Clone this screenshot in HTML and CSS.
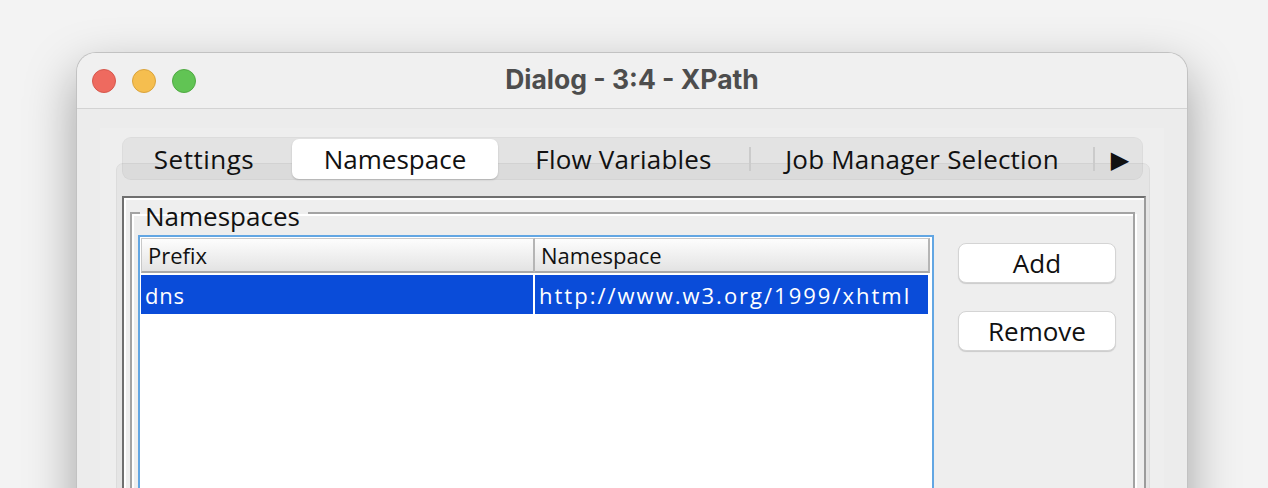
FILE: index.html
```html
<!DOCTYPE html>
<html lang="en">
<head>
  <meta charset="UTF-8">
  <title>Dialog - 3:4 - XPath</title>
  <link rel="stylesheet" href="styles.css">
</head>
<body>
  <div class="window">
    <div class="titlebar">
      <div class="lights">
        <span class="light red"></span>
        <span class="light yellow"></span>
        <span class="light green"></span>
      </div>
      <div class="title">Dialog - 3:4 - XPath</div>
    </div>

    <div class="body">
      <div class="panel">
        <div class="tabbar">
          <div class="tab tab-settings">Settings</div>
          <div class="tab tab-ns selected">Namespace</div>
          <div class="tab tab-flow">Flow Variables</div>
          <span class="sep"></span>
          <div class="tab tab-job">Job Manager Selection</div>
          <span class="sep"></span>
          <div class="tab tab-more">&#9654;</div>
        </div>

        <div class="tabpane">
          <div class="tabcontent">
            <fieldset class="group">
              <legend>Namespaces</legend>
              <div class="group-body">
                <div class="table-wrap">
                  <table class="ns-table">
                    <thead>
                      <tr>
                        <th class="col-prefix">Prefix</th>
                        <th class="col-ns">Namespace</th>
                      </tr>
                    </thead>
                    <tbody>
                      <tr class="row-selected">
                        <td>dns</td>
                        <td class="url">http://www.w3.org/1999/xhtml</td>
                      </tr>
                    </tbody>
                  </table>
                </div>
                <div class="buttons">
                  <button class="btn">Add</button>
                  <button class="btn">Remove</button>
                </div>
              </div>
            </fieldset>
          </div>
        </div>
      </div>
    </div>
  </div>
</body>
</html>
```

FILE: styles.css
```css
html, body {
  margin: 0;
  height: 100%;
  overflow: hidden;
}
body {
  background: #f3f3f3;
  font-family: "Open Sans", "DejaVu Sans", sans-serif;
  color: #111;
}
.window {
  box-sizing: border-box;
  width: 1112px;
  height: 520px;
  margin: 52px 0 0 76px;
  border: 1px solid #c2c2c2;
  border-bottom: none;
  border-radius: 20px 20px 0 0;
  background: #ececec;
  box-shadow: 0 20px 50px rgba(0,0,0,0.34);
  overflow: hidden;
}

/* title bar */
.titlebar {
  height: 55px;
  display: grid;
  grid-template-columns: 1fr auto 1fr;
  align-items: center;
  background: #f0f0f0;
  border-bottom: 1px solid #d3d3d3;
}
.lights {
  display: flex;
  gap: 16px;
  padding-left: 15px;
  padding-top: 1px;
}
.light {
  box-sizing: border-box;
  width: 24px;
  height: 24px;
  border-radius: 50%;
  border: 1px solid;
}
.red { background: #ee6a5f; border-color: #d5584d; }
.yellow { background: #f5be4f; border-color: #d9a33c; }
.green { background: #61c454; border-color: #50a943; }
.title {
  font-family: Inter, "Liberation Sans", sans-serif;
  font-weight: 700;
  font-size: 26.5px;
  color: #4d4d4d;
  padding-bottom: 3px;
}

/* content */
.body {
  padding: 19px 23px 0 23px;
}
.panel {
  background: #eeeeee;
  padding: 9px 14px 0 16px;
  height: 400px;
}
.tabbar {
  position: relative;
  z-index: 1;
  box-sizing: border-box;
  height: 43px;
  margin: 0 7px 0 6px;
  display: flex;
  align-items: center;
  background: rgba(0,0,0,0.045);
  border: 1px solid rgba(0,0,0,0.035);
  border-radius: 9px;
  font-size: 26px;
  letter-spacing: 0.2px;
}
.tab {
  flex: none;
  box-sizing: border-box;
  height: 40px;
  line-height: 40px;
  text-align: center;
  color: #111;
}
.tab-settings { width: 169px; padding-right: 7px; letter-spacing: 0.5px; }
.tab-ns { width: 206px; letter-spacing: 0; }
.tab-flow { width: 251px; }
.tab-job { width: 342px; }
.tab-more { width: 50px; font-size: 24px; }
.tab.selected {
  background: #fff;
  border-radius: 7px;
  box-shadow: 0 1px 2px rgba(0,0,0,0.18);
}
.sep {
  flex: none;
  width: 2px;
  height: 24px;
  background: #cbcbcb;
}
.tabpane {
  margin-top: -17px;
  height: 360px;
  padding: 32px 3px 0 5px;
  background: #e5e5e5;
  border: 1px solid #dcdcdc;
  border-radius: 7px;
}
.tabcontent {
  height: 320px;
  background: #eeeeee;
  border: 2px solid;
  border-color: #6f6f6f #9c9c9c #9c9c9c #6f6f6f;
  box-shadow: inset 2px 2px 0 #fff;
}

/* group box */
.group {
  margin: -3px 9px 0 6px;
  padding: 0 0 0 6px;
  border: 2px solid #a3a3a3;
  box-shadow: inset 2px 2px 0 #fff, 2px 2px 0 #fff;
  min-width: 0;
}
.group legend {
  margin-left: 2px;
  padding: 6px 8px 0 5px;
  font-size: 26px;
  line-height: 30px;
  color: #111;
}
.group-body {
  display: flex;
  align-items: flex-start;
  gap: 24px;
  padding-top: 4px;
}
.table-wrap {
  box-sizing: border-box;
  width: 796px;
  height: 320px;
  padding: 1px;
  border: 2px solid #62a6e3;
  background: #fff;
}
.ns-table {
  border-collapse: separate;
  border-spacing: 0;
  width: 789px;
  font-size: 22px;
}
.ns-table th {
  box-sizing: border-box;
  height: 35px;
  padding: 0 6px;
  text-align: left;
  font-weight: normal;
  color: #111;
  background: linear-gradient(#fdfdfd, #e3e3e3);
  border-top: 1px solid #c8c8c8;
  border-bottom: 2px solid #a9a9a9;
  border-right: 2px solid #b5b5b5;
}
.ns-table th.col-prefix {
  width: 394px;
  border-left: 1px solid #c8c8c8;
}
.ns-table td {
  height: 39px;
  padding: 0 3px 0 4px;
  border-top: 2px solid #fff;
  letter-spacing: 0.8px;
}
.ns-table td.url {
  letter-spacing: 2px;
}
.row-selected td {
  background: #0a4cd9;
  color: #fff;
  border-right: 2px solid #fff;
}
.buttons {
  display: flex;
  flex-direction: column;
  gap: 28px;
  margin-top: 8px;
}
.btn {
  box-sizing: border-box;
  width: 158px;
  height: 40px;
  padding: 0;
  font-family: "Open Sans", "DejaVu Sans", sans-serif;
  font-size: 26px;
  color: #111;
  background: #fff;
  border: 1px solid #d4d4d4;
  border-radius: 8px;
  box-shadow: 0 1px 1px rgba(0,0,0,0.15);
}
```
